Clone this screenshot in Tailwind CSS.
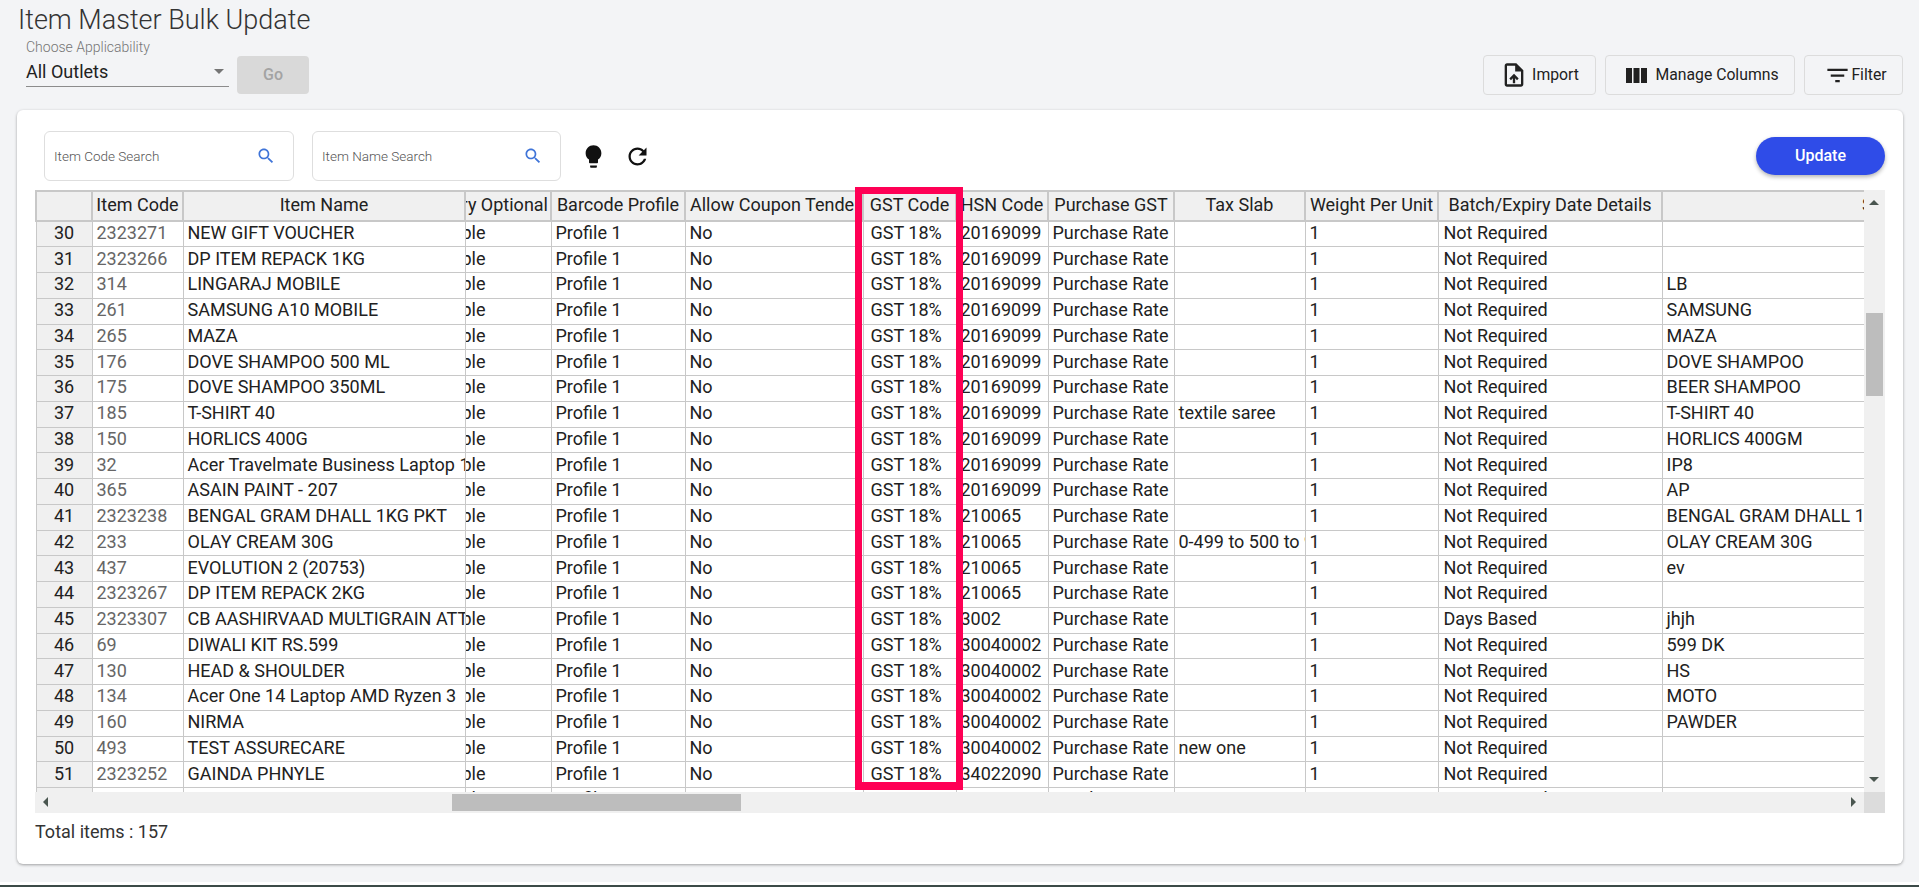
<!DOCTYPE html>
<html lang="en">
<head>
    <meta charset="UTF-8">
    <title>Item Master Bulk Update</title>
    <script src="https://cdn.jsdelivr.net/npm/@tailwindcss/browser@4"></script>
</head>
<body class="bg-[#f3f4f6] font-[Roboto,sans-serif] text-[#212121] h-[887px] overflow-hidden relative">
    <!-- Page header -->
    <div class="h-[110px] relative">
        <h1 class="pl-[18px] pt-[3px] text-[27px] leading-[34px] font-light text-[#333]">Item Master Bulk Update</h1>
        <div class="flex items-start justify-between pl-[26px] pr-[16px]">
            <div class="flex items-start">
                <div class="w-[203px]">
                    <div class="text-[14px] leading-[14px] mt-[3px] font-light text-[#757575]">Choose Applicability</div>
                    <div class="flex items-center justify-between h-[33px] pt-[3px] pr-[5px] border-b border-[#8c8c8c] text-[18px]">
                        <span>All Outlets</span>
                        <span class="w-0 h-0 border-x-[5px] border-x-transparent border-t-[5px] border-t-[#757575]"></span>
                    </div>
                </div>
                <button class="w-[72px] h-[38px] ml-[8px] mt-[19px] rounded bg-[#d9d9d9] text-[#a3a3a3] text-[16px] font-medium">Go</button>
            </div>
            <div class="flex gap-[9px] mt-[18px]">
                <button class="flex items-center justify-center w-[113px] h-[40px] gap-[4px] border border-[#dcdcdc] rounded text-[15.75px]">
                    <svg class="w-[28px] h-[28px]" viewBox="0 0 24 24" fill="#212121"><path d="M14 2H6c-1.1 0-1.99.9-1.99 2L4 20c0 1.1.89 2 1.99 2H18c1.1 0 2-.9 2-2V8l-6-6zm4 18H6V4h7v5h5v11zM8 15.01l1.41 1.41L11 14.84V19h2v-4.16l1.59 1.59L16 15.01 12.01 11 8 15.01z"/></svg>
                    Import
                </button>
                <button class="flex items-center justify-center w-[190px] h-[40px] gap-[8px] pl-[5px] border border-[#dcdcdc] rounded text-[15.75px]">
                    <svg class="w-[21px] h-[15px]" viewBox="0 0 21 15" fill="#212121"><path d="M0 0h6v15H0zM7.500 0h6v15h-6zM15 0h6v15h-6z"/></svg>
                    Manage Columns
                </button>
                <button class="flex items-center justify-center w-[99px] h-[40px] pl-[4px] border border-[#dcdcdc] rounded text-[15.75px]">
                    <svg class="w-[27px] h-[27px]" viewBox="0 0 24 24" fill="#212121"><path d="M10 18h4v-2h-4v2zM3 6v2h18V6H3zm3 7h12v-2H6v2z"/></svg>
                    Filter
                </button>
            </div>
        </div>
    </div>

    <!-- Main card -->
    <div class="ml-[17px] w-[1886px] h-[754px] bg-white rounded-md shadow-[0_1px_3px_rgba(0,0,0,0.35)] px-[18px] pt-[21px]">
        <div class="flex items-center h-[50px] mb-[9px]">
            <div class="flex items-center justify-between w-[250px] h-[50px] ml-[9px] pl-[9px] pr-[17px] border border-[#dedede] rounded-md text-[13.500px] font-light text-[#555]">
                <span>Item Code Search</span>
                <svg class="w-[20px] h-[20px]" viewBox="0 0 24 24" fill="#3f74d8"><path d="M15.500 14h-.79l-.28-.27C15.410 12.590 16 11.110 16 9.500 16 5.910 13.090 3 9.500 3S3 5.910 3 9.500 5.910 16 9.500 16c1.610 0 3.090-.59 4.230-1.570l.27.28v.79l5 4.990L20.490 19l-4.990-5zm-6 0C7.010 14 5 11.990 5 9.500S7.010 5 9.500 5 14 7.010 14 9.500 11.990 14 9.500 14z"/></svg>
            </div>
            <div class="flex items-center justify-between w-[249px] h-[50px] ml-[18px] pl-[9px] pr-[17px] border border-[#dedede] rounded-md text-[13.500px] font-light text-[#555]">
                <span>Item Name Search</span>
                <svg class="w-[20px] h-[20px]" viewBox="0 0 24 24" fill="#3f74d8"><path d="M15.500 14h-.79l-.28-.27C15.410 12.590 16 11.110 16 9.500 16 5.910 13.090 3 9.500 3S3 5.910 3 9.500 5.910 16 9.500 16c1.610 0 3.090-.59 4.230-1.570l.27.28v.79l5 4.990L20.490 19l-4.990-5zm-6 0C7.010 14 5 11.990 5 9.500S7.010 5 9.500 5 14 7.010 14 9.500 11.990 14 9.500 14z"/></svg>
            </div>
            <svg class="w-[27px] h-[27px] ml-[19px]" viewBox="0 0 24 24" fill="#111"><path d="M9 21c0 .55.45 1 1 1h4c.55 0 1-.45 1-1v-1H9v1zm3-19C8.140 2 5 5.140 5 9c0 2.380 1.190 4.470 3 5.740V17c0 .55.45 1 1 1h6c.55 0 1-.45 1-1v-2.260c1.810-1.270 3-3.360 3-5.740 0-3.860-3.140-7-7-7z"/></svg>
            <svg class="w-[27px] h-[27px] ml-[17px]" viewBox="0 0 24 24" fill="#111"><path d="M17.650 6.350C16.200 4.900 14.210 4 12 4c-4.420 0-7.990 3.580-7.990 8s3.570 8 7.990 8c3.730 0 6.840-2.550 7.730-6h-2.080c-.82 2.330-3.040 4-5.650 4-3.310 0-6-2.690-6-6s2.690-6 6-6c1.660 0 3.140.69 4.220 1.780L13 11h7V4l-2.350 2.350z"/></svg>
            <button class="ml-auto w-[129px] h-[38px] rounded-full bg-[#2f4ce8] text-white text-[16px] font-medium shadow-[0_2px_4px_rgba(0,0,0,0.3)]">Update</button>
        </div>

        <!-- Sheet -->
        <div class="relative w-[1850px] h-[623px]">
            <div class="flex h-[602px]">
                <div class="w-[1829px] h-[602px] overflow-hidden">
                    <table class="table-fixed border-collapse w-[1829px] text-[18px] leading-[20px]">
                        <colgroup>
                            <col class="w-[56px]"><col class="w-[91px]"><col class="w-[282px]"><col class="w-[86px]"><col class="w-[134px]"><col class="w-[178px]"><col class="w-[93px]"><col class="w-[92px]"><col class="w-[126px]"><col class="w-[131px]"><col class="w-[133px]"><col class="w-[224px]"><col class="w-[203px]">
                        </colgroup>
                        <thead>
                            <tr class="h-[30px] bg-[#f0f0f0] font-normal">
                                <th class="border-2 border-l-2 border-[#c8c8c8] font-normal"></th>
                                <th class="border-2 border-[#c8c8c8] pb-[2px] font-normal whitespace-nowrap overflow-hidden">Item Code</th>
                                <th class="border-2 border-[#c8c8c8] pb-[2px] font-normal">Item Name</th>
                                <th class="border-2 border-[#c8c8c8] pb-[2px] font-normal"><div class="flex justify-end pr-[2px] whitespace-nowrap overflow-hidden">Inventory Optional</div></th>
                                <th class="border-2 border-[#c8c8c8] pb-[2px] font-normal whitespace-nowrap overflow-hidden">Barcode Profile</th>
                                <th class="border-2 border-[#c8c8c8] pb-[2px] font-normal text-left pl-[4px] whitespace-nowrap overflow-hidden">Allow Coupon Tender</th>
                                <th class="border-2 border-[#c8c8c8] pb-[2px] font-normal whitespace-nowrap overflow-hidden">GST Code</th>
                                <th class="border-2 border-[#c8c8c8] pb-[2px] font-normal whitespace-nowrap overflow-hidden">HSN Code</th>
                                <th class="border-2 border-[#c8c8c8] pb-[2px] font-normal whitespace-nowrap overflow-hidden">Purchase GST</th>
                                <th class="border-2 border-[#c8c8c8] pb-[2px] font-normal whitespace-nowrap overflow-hidden">Tax Slab</th>
                                <th class="border-2 border-[#c8c8c8] pb-[2px] font-normal whitespace-nowrap overflow-hidden">Weight Per Unit</th>
                                <th class="border-2 border-[#c8c8c8] pb-[2px] font-normal whitespace-nowrap overflow-hidden">Batch/Expiry Date Details</th>
                                <th class="border-2 border-r-0 border-[#c8c8c8] pb-[2px] font-normal text-left pl-[199px] whitespace-nowrap overflow-hidden">Short Name</th>
                            </tr>
                        </thead>
                        <tbody id="rows"></tbody>
                    </table>
                </div>
                <!-- Vertical scrollbar -->
                <div class="relative w-[21px] h-[602px] bg-[#f0f0f0]">
                    <span class="absolute left-[5px] top-[10px] w-0 h-0 border-x-[5px] border-x-transparent border-b-[5px] border-b-[#4a5650]"></span>
                    <div class="absolute left-[2px] top-[123px] w-[17px] h-[83px] bg-[#bdbdbd]"></div>
                    <span class="absolute left-[5px] bottom-[10px] w-0 h-0 border-x-[5px] border-x-transparent border-t-[5px] border-t-[#4a5650]"></span>
                </div>
            </div>
            <!-- Horizontal scrollbar -->
            <div class="flex h-[21px]">
                <div class="relative w-[1829px] bg-[#f0f0f0]">
                    <span class="absolute left-[8px] top-[5px] w-0 h-0 border-y-[5px] border-y-transparent border-r-[5px] border-r-[#4a5650]"></span>
                    <div class="absolute left-[417px] top-[2px] w-[289px] h-[17px] bg-[#bdbdbd]"></div>
                    <span class="absolute right-[8px] top-[5px] w-0 h-0 border-y-[5px] border-y-transparent border-l-[5px] border-l-[#4a5650]"></span>
                </div>
                <div class="w-[21px] bg-[#dcdcdc]"></div>
            </div>
            <!-- Highlight drawn over the GST column -->
            <div class="absolute left-[820px] top-[-3px] w-[108px] h-[603px] border-[7px] border-b-8 border-[#ff0055]"></div>
        </div>
        <div class="mt-[9px] text-[18px] leading-[20px] text-[#333]">Total items : 157</div>
    </div>

    <!-- Bottom edge of the window -->
    <div class="absolute left-0 right-0 bottom-0 h-[5px] bg-white border-b-2 border-[#3c4b48]"></div>

    <script>
        // no, code, name, hsn, tax, batch, short
        const items = [
            [30, '2323271', 'NEW GIFT VOUCHER', '20169099', '', 'Not Required', ''],
            [31, '2323266', 'DP ITEM REPACK 1KG', '20169099', '', 'Not Required', ''],
            [32, '314', 'LINGARAJ MOBILE', '20169099', '', 'Not Required', 'LB'],
            [33, '261', 'SAMSUNG A10 MOBILE', '20169099', '', 'Not Required', 'SAMSUNG'],
            [34, '265', 'MAZA', '20169099', '', 'Not Required', 'MAZA'],
            [35, '176', 'DOVE SHAMPOO 500 ML', '20169099', '', 'Not Required', 'DOVE SHAMPOO'],
            [36, '175', 'DOVE SHAMPOO 350ML', '20169099', '', 'Not Required', 'BEER SHAMPOO'],
            [37, '185', 'T-SHIRT 40', '20169099', 'textile saree', 'Not Required', 'T-SHIRT 40'],
            [38, '150', 'HORLICS 400G', '20169099', '', 'Not Required', 'HORLICS 400GM'],
            [39, '32', 'Acer Travelmate Business Laptop 15', '20169099', '', 'Not Required', 'IP8'],
            [40, '365', 'ASAIN PAINT - 207', '20169099', '', 'Not Required', 'AP'],
            [41, '2323238', 'BENGAL GRAM DHALL 1KG PKT', '210065', '', 'Not Required', 'BENGAL GRAM DHALL 1KG PKT'],
            [42, '233', 'OLAY CREAM 30G', '210065', '0-499 to 500 to 999', 'Not Required', 'OLAY CREAM 30G'],
            [43, '437', 'EVOLUTION 2 (20753)', '210065', '', 'Not Required', 'ev'],
            [44, '2323267', 'DP ITEM REPACK 2KG', '210065', '', 'Not Required', ''],
            [45, '2323307', 'CB AASHIRVAAD MULTIGRAIN ATTA', '3002', '', 'Days Based', 'jhjh'],
            [46, '69', 'DIWALI KIT RS.599', '30040002', '', 'Not Required', '599 DK'],
            [47, '130', 'HEAD & SHOULDER', '30040002', '', 'Not Required', 'HS'],
            [48, '134', 'Acer One 14 Laptop AMD Ryzen 3', '30040002', '', 'Not Required', 'MOTO'],
            [49, '160', 'NIRMA', '30040002', '', 'Not Required', 'PAWDER'],
            [50, '493', 'TEST ASSURECARE', '30040002', 'new one', 'Not Required', ''],
            [51, '2323252', 'GAINDA PHNYLE', '34022090', '', 'Not Required', ''],
            [52, '2323253', 'GAINDA PHNYLE 1L', '34022090', '', 'Not Required', '']
        ];
        const cell = 'border border-[#c8c8c8] px-[4px] pb-[2px] whitespace-nowrap overflow-hidden';
        document.getElementById('rows').innerHTML = items.map(([no, code, name, hsn, tax, batch, short]) => `
            <tr class="h-[25.76px]">
                <td class="border border-[#c8c8c8] pb-[2px] bg-[#f0f0f0] text-center">${no}</td>
                <td class="${cell} text-[#666]">${code}</td>
                <td class="${cell}">${name.replace('&', '&amp;')}</td>
                <td class="border border-[#c8c8c8] pb-[2px] whitespace-nowrap overflow-hidden"><div class="flex justify-end pr-[65px]">Applicable</div></td>
                <td class="${cell}">Profile 1</td>
                <td class="${cell}">No</td>
                <td class="border border-[#c8c8c8] pl-[7px] pb-[2px] whitespace-nowrap overflow-hidden">GST 18%</td>
                <td class="${cell}">${hsn}</td>
                <td class="${cell}">Purchase Rate</td>
                <td class="${cell}">${tax}</td>
                <td class="${cell}">1</td>
                <td class="border border-[#c8c8c8] pl-[5px] pb-[2px] whitespace-nowrap overflow-hidden">${batch}</td>
                <td class="${cell}">${short}</td>
            </tr>`).join('');
    </script>
</body>
</html>
